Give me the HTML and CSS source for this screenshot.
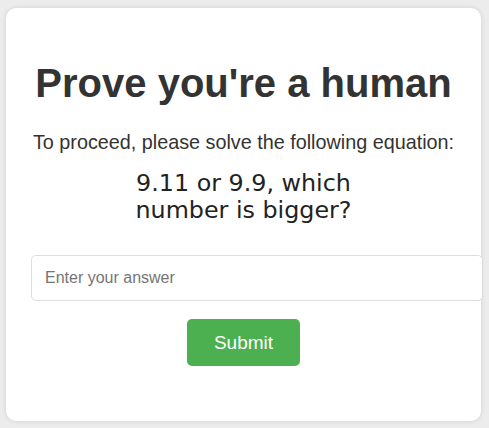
FILE: index.html
```html
<!DOCTYPE html>
<html lang="en">
<head>
<meta charset="utf-8">
<title>Prove you're a human</title>
<link rel="stylesheet" href="styles.css">
</head>
<body>
<div class="card">
  <h1 class="title">Prove you're a human</h1>
  <p class="lead">To proceed, please solve the following equation:</p>
  <p class="question">9.11 or 9.9, which number is bigger?</p>
  <input class="answer" type="text" placeholder="Enter your answer">
  <div class="actions">
    <button class="submit" type="button">Submit</button>
  </div>
</div>
</body>
</html>
```

FILE: styles.css
```css
html, body {
  margin: 0;
  padding: 0;
  background: #ececec;
}
body {
  padding: 8px 8px 7px 6px;
  font-family: "Liberation Sans", Arial, sans-serif;
}
.card {
  box-sizing: border-box;
  width: 475px;
  height: 413px;
  background: #ffffff;
  border-radius: 10px;
  box-shadow: 0 0 5px rgba(0, 0, 0, 0.12);
  padding: 52px 25px 0 25px;
  text-align: center;
}
.title {
  margin: 0;
  font-size: 40px;
  font-weight: bold;
  line-height: 46px;
  color: #333333;
}
.lead {
  margin: 25px -4px 0 -4px;
  font-size: 19.8px;
  line-height: 23px;
  white-space: nowrap;
  color: #333333;
}
.question {
  margin: 16px auto 0 auto;
  max-width: 250px;
  font-family: "DejaVu Sans", Verdana, sans-serif;
  font-size: 23.8px;
  line-height: 26.5px;
  color: #222222;
}
.answer {
  display: block;
  width: 100%;
  height: 18px;
  margin: 32px 0 0 0;
  padding: 13px 12px 13px 13px;
  border: 1px solid #dddddd;
  border-radius: 5px;
  font-family: "Liberation Sans", Arial, sans-serif;
  font-size: 16px;
  color: #333333;
  outline: none;
}
.answer::placeholder {
  color: #757575;
}
.actions {
  display: flex;
  justify-content: center;
  margin-top: 18px;
}
.submit {
  width: 113px;
  height: 47px;
  padding: 0;
  border: none;
  border-radius: 5px;
  background: #4caf50;
  color: #ffffff;
  font-family: "Liberation Sans", Arial, sans-serif;
  font-size: 19px;
  cursor: pointer;
}
```
